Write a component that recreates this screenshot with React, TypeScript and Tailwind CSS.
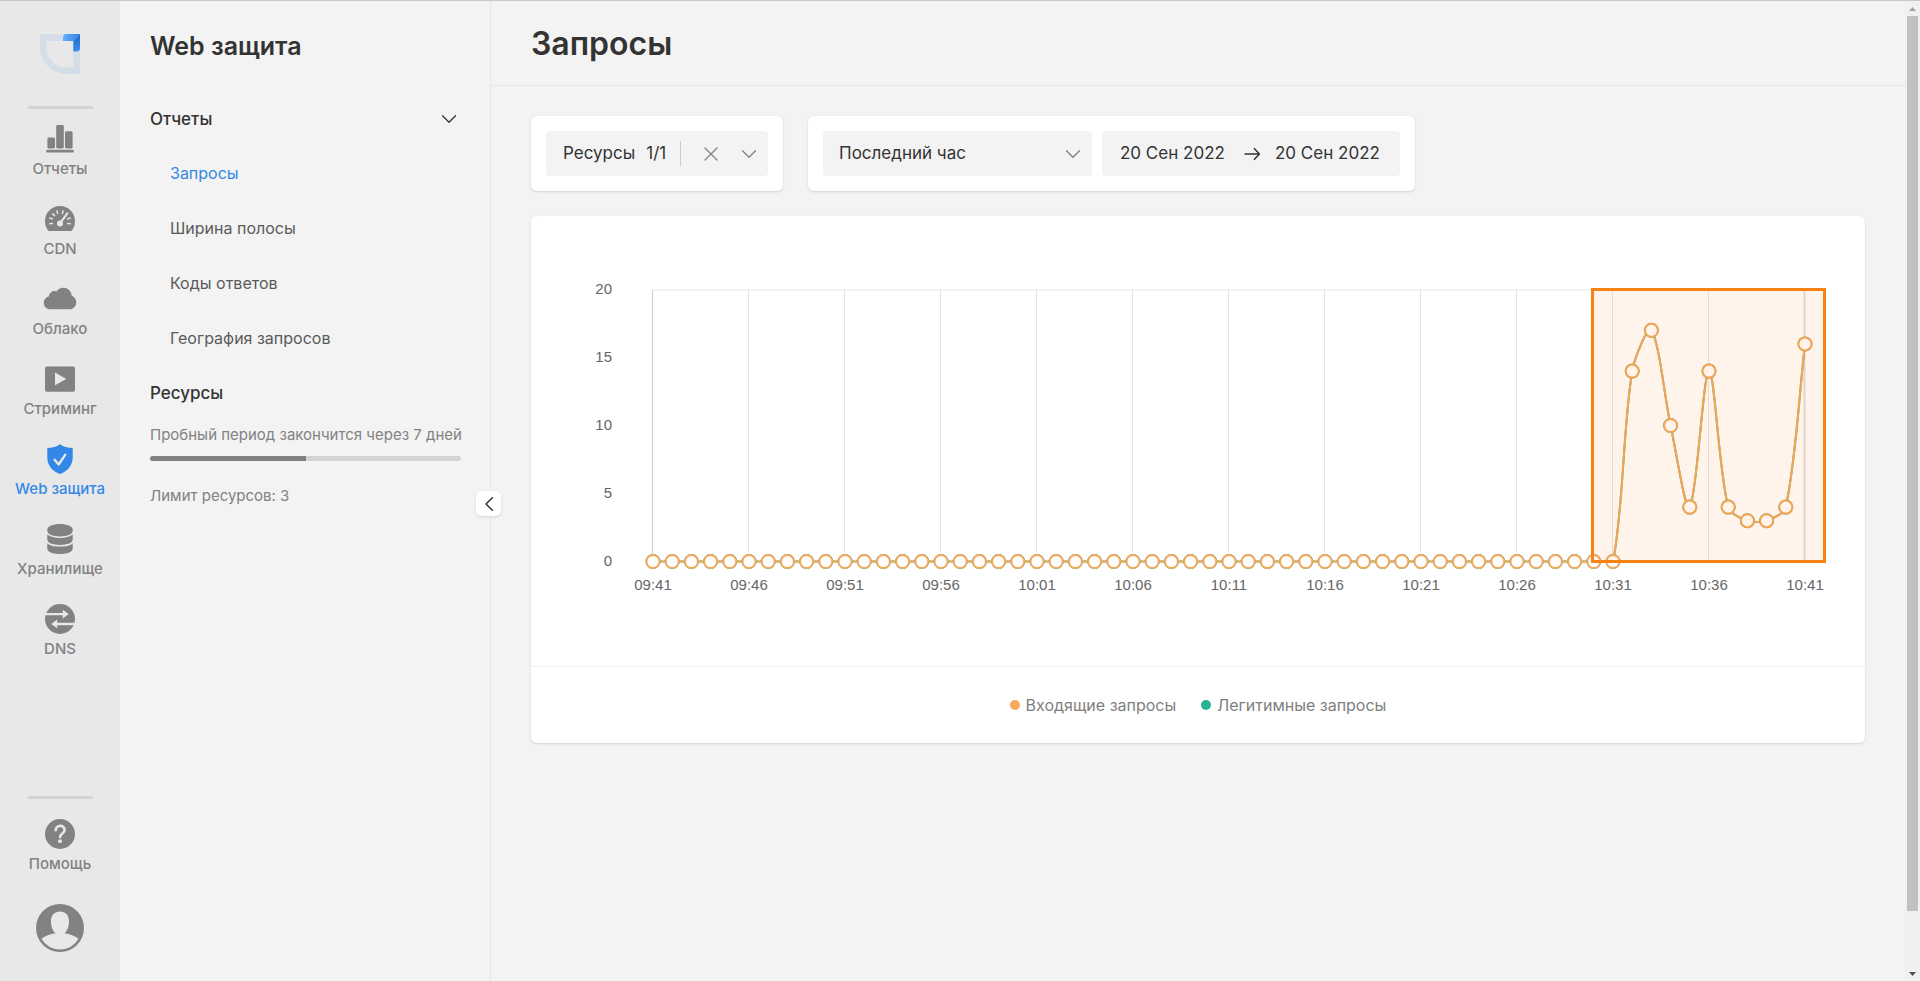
import React, { useState } from 'react';
import clsx from 'clsx';

type NavItem = {
  id: string;
  label: string;
  icon: React.ReactNode;
};

const navItems: NavItem[] = [
  {
    id: 'reports',
    label: 'Отчеты',
    icon: (
      <>
        <rect x="2.4" y="13.4" width="7.6" height="11" rx="1.4" />
        <rect x="11.2" y="1" width="7.6" height="23.4" rx="1.4" />
        <rect x="20" y="7.2" width="7.6" height="17.2" rx="1.4" />
        <rect x="1.2" y="25.8" width="27.6" height="2.6" rx="1" />
      </>
    ),
  },
  {
    id: 'cdn',
    label: 'CDN',
    icon: (
      <>
        <path d="M15 2C6.700 2 0 8.700 0 17c0 3.200.9 6.100 2.500 8.700.5.8 1.300 1.300 2.300 1.300h20.400c1 0 1.800-.5 2.300-1.300A16 16 0 0 0 30 17C30 8.700 23.300 2 15 2z" />
        <g stroke="#e8e8e8" strokeWidth="1.500" strokeLinecap="round">
          <path d="M4.800 19.800l2.600-.3M4.800 14l2.500.9M7.600 9.900l2 1.700M12 7l.6 2.400M18 7l-.6 2.400M25.200 14l-2.500.9M25.200 19.800l-2.600-.3" />
          <path d="M22.300 9.300l-6 8.400" strokeWidth="2" />
        </g>
        <circle cx="15" cy="19.600" r="3" fill="#e8e8e8" />
      </>
    ),
  },
  {
    id: 'cloud',
    label: 'Облако',
    icon: (
      <path d="M5.500 25.300C1.600 25.300-1.200 22.500-1.200 19c0-3.300 2.200-5.800 5-6.400C4 9.600 6.400 7 9.300 7c.8 0 1.600.2 2.200.5C13 4.900 15.500 3.800 18.200 3.800c4.700 0 8.200 3.500 8.500 8 2.600.8 4.600 3.600 4.600 6.700 0 3.700-3 6.800-6.700 6.800z" />
    ),
  },
  {
    id: 'streaming',
    label: 'Стриминг',
    icon: (
      <>
        <rect x="0" y="2.400" width="30" height="25.300" rx="1.800" />
        <path d="M10 8.500v12.800L21.300 15z" fill="#e8e8e8" />
      </>
    ),
  },
  {
    id: 'waf',
    label: 'Web защита',
    icon: (
      <>
        <path d="M15 .2c3.500 2.600 7.600 3.700 12.700 3.700v9.600c0 7.500-4.600 13.400-12.700 16.500C6.900 26.900 2.300 21 2.300 13.500V3.900C7.400 3.900 11.500 2.800 15 .2z" />
        <path d="M9.600 15.800l4.100 4.700 6.600-9.900" fill="none" stroke="#e8e8e8" strokeWidth="2.300" strokeLinecap="round" strokeLinejoin="round" />
      </>
    ),
  },
  {
    id: 'storage',
    label: 'Хранилище',
    icon: (
      <>
        <path d="M2.300 5.700C2.300 2.300 7.500 0 15 0s12.700 2.300 12.700 5.700v1.100c0 3.400-5.200 5.700-12.700 5.700S2.300 10.200 2.300 6.800z" />
        <path d="M2.300 10.600C5 12.900 9.500 14 15 14s10-1.100 12.700-3.400v5C27.700 19 22.500 21 15 21S2.300 19 2.300 15.600z" />
        <path d="M2.300 19.400C5 21.600 9.500 22.600 15 22.600s10-1 12.700-3.200v5.100c0 3.300-5.200 5.500-12.700 5.500S2.300 27.800 2.300 24.500z" />
      </>
    ),
  },
  {
    id: 'dns',
    label: 'DNS',
    icon: (
      <>
        <circle cx="15" cy="15" r="15" />
        <g fill="#e8e8e8">
          <path d="M0 8.900h17.800V5.800l5.900 4.300-5.900 4.300v-3.100H0z" />
          <path d="M30 18.800H12.200v-3.200l-5.900 4.400 5.900 4.300v-3.100H30z" />
        </g>
      </>
    ),
  },
];

const reportLinks = ['Запросы', 'Ширина полосы', 'Коды ответов', 'География запросов'];

// requests per minute, 09:41 - 10:41
const requests = [...Array(51).fill(0), 14, 17, 10, 4, 14, 4, 3, 3, 4, 16] as number[];
const timeLabels = ['09:41', '09:46', '09:51', '09:56', '10:01', '10:06', '10:11', '10:16', '10:21', '10:26', '10:31', '10:36', '10:41'];
const valueLabels = [20, 15, 10, 5, 0];

const LEFT = 122;
const TOP = 73.500;
const BOTTOM = 345.500;
const STEP = 19.2;

const points = requests.map((value, i) => ({
  x: LEFT + i * STEP,
  y: BOTTOM - (value / 20) * (BOTTOM - TOP),
}));

const clampY = (y: number) => Math.min(BOTTOM, Math.max(TOP, y));

function buildCurve(tension: number) {
  const handles = points.map((p, i) => {
    const prev = points[i - 1] ?? p;
    const next = points[i + 1] ?? p;
    const d0 = Math.hypot(p.x - prev.x, p.y - prev.y);
    const d1 = Math.hypot(next.x - p.x, next.y - p.y);
    const a = (tension * d0) / (d0 + d1);
    const b = (tension * d1) / (d0 + d1);
    return {
      inX: p.x - a * (next.x - prev.x),
      inY: clampY(p.y - a * (next.y - prev.y)),
      outX: p.x + b * (next.x - prev.x),
      outY: clampY(p.y + b * (next.y - prev.y)),
    };
  });

  return points
    .map((p, i) =>
      i === 0
        ? `M${p.x} ${p.y}`
        : `C${handles[i - 1].outX} ${handles[i - 1].outY} ${handles[i].inX} ${handles[i].inY} ${p.x} ${p.y}`
    )
    .join('');
}

const curve = buildCurve(0.3);

function Chevron({ className }: { className?: string }) {
  return (
    <svg viewBox="0 0 14 8" className={clsx('w-[14px] h-2 shrink-0', className)} fill="none" stroke="currentColor" aria-hidden="true">
      <path d="M.5.700L7 7.200 13.500.700" strokeWidth="1.300" strokeLinecap="round" strokeLinejoin="round" />
    </svg>
  );
}

function Logo() {
  return (
    <svg viewBox="0 0 40 40" className="w-10 h-10" aria-hidden="true">
      <defs>
        <linearGradient id="logo-top" x1="0" x2="1">
          <stop offset="0" stopColor="#69b0ff" />
          <stop offset="1" stopColor="#2c80e6" />
        </linearGradient>
        <linearGradient id="logo-side" x1="0" x2="0" y1="0" y2="1">
          <stop offset="0" stopColor="#1b68c4" />
          <stop offset="1" stopColor="#3a8ff0" />
        </linearGradient>
      </defs>
      <path d="M0 0h40v40H27C12 40 0 28 0 13zM6.300 7v6c0 11.500 9 20.300 20.700 20.300h6.300V7z" fill="#d5dee8" fillRule="evenodd" />
      <path d="M40 0H26c-2 0-3 1.500-3 3.500V7h10.300z" fill="url(#logo-top)" />
      <path d="M40 0v14.500c0 1.700-1.500 3-3.500 3h-3.200V7z" fill="url(#logo-side)" />
    </svg>
  );
}

function SideButton({ item, active, onClick }: { item: NavItem; active?: boolean; onClick?: () => void }) {
  return (
    <button
      onClick={onClick}
      className={clsx('flex flex-col items-center gap-[5px] w-full', active ? 'text-[#3388e7]' : 'text-[#828282]')}
    >
      <svg viewBox="0 0 30 30" className="w-[30px] h-[30px] overflow-visible" fill="currentColor" aria-hidden="true">
        {item.icon}
      </svg>
      <span className="text-[15px] leading-5 font-medium">{item.label}</span>
    </button>
  );
}

const helpItem: NavItem = {
  id: 'help',
  label: 'Помощь',
  icon: (
    <>
      <circle cx="15" cy="15" r="15" />
      <path d="M10.700 11.200c0-2.600 1.900-4.300 4.500-4.300 2.500 0 4.400 1.600 4.400 4 0 3.400-4.500 3.600-4.500 7" fill="none" stroke="#e8e8e8" strokeWidth="2.600" strokeLinecap="round" />
      <circle cx="15" cy="22.200" r="1.900" fill="#e8e8e8" />
    </>
  ),
};

function RequestsChart() {
  return (
    <svg viewBox="0 0 1334 450" className="block w-full h-auto" role="img" aria-label="График запросов">
      <path d={`M${LEFT} 74H1274`} stroke="#f2f2f2" strokeWidth="2" />
      {timeLabels.map((label, i) => (
        <path
          key={label}
          d={`M${121.5 + i * 96} 74V346`}
          stroke={i === 0 ? '#cccccc' : i === 12 ? '#dddddd' : '#e3e3e3'}
          strokeWidth={i === 12 ? 2 : 1}
        />
      ))}

      <g fill="#666666" className="font-['Liberation_Sans',sans-serif] text-[15px]">
        {valueLabels.map((value, i) => (
          <text key={value} x="81" y={78 + i * 68} textAnchor="end">
            {value}
          </text>
        ))}
        {timeLabels.map((label, i) => (
          <text key={label} x={LEFT + i * 96} y="374" textAnchor="middle">
            {label}
          </text>
        ))}
      </g>

      {/* both series have the same values, so the second one only shows at the edges */}
      <path d={curve} fill="none" stroke="#2bb596" strokeWidth="2" />
      <path d={curve} fill="none" stroke="#f7a859" strokeWidth="2" />
      {points.map((p) => (
        <g key={p.x} strokeWidth="2">
          <circle cx={p.x} cy={p.y} r="6.500" fill="#ffffff" stroke="#2bb596" />
          <circle cx={p.x} cy={p.y} r="6.500" fill="#ffffff" stroke="#f7a859" />
        </g>
      ))}

      <rect x="1061.500" y="73.500" width="232" height="272" fill="#f58220" fillOpacity="0.09" stroke="#f98217" strokeWidth="3" />
    </svg>
  );
}

function App() {
  const [section, setSection] = useState('waf');
  const [report, setReport] = useState('Запросы');
  const [reportsOpen, setReportsOpen] = useState(true);

  return (
    <div className="flex min-h-screen border-t border-[#c8c8c8] bg-[#f3f3f3] text-[#333333] font-[Inter,sans-serif]">
      <aside className="flex flex-col items-center w-[120px] shrink-0 bg-[#e8e8e8] pt-[33px] pb-[29px]">
        <Logo />
        <div className="w-[65px] h-[3px] mt-8 rounded-sm bg-[#d3d3d3]" />
        <nav className="flex flex-col gap-[25px] w-full mt-[15px]">
          {navItems.map((item) => (
            <SideButton key={item.id} item={item} active={item.id === section} onClick={() => setSection(item.id)} />
          ))}
        </nav>
        <div className="w-[65px] h-[3px] mt-auto mb-5 rounded-sm bg-[#d3d3d3]" />
        <SideButton item={helpItem} />
        <button className="mt-[30px]" aria-label="Профиль">
          <svg viewBox="0 0 48 48" className="w-12 h-12" aria-hidden="true">
            <circle cx="24" cy="24" r="24" fill="#828282" />
            <path d="M24 7.500c5.500 0 9 3.700 9 9.500 0 6-1.500 9.500-4.500 12.300 5.500.7 10.300 2.500 14 5.500A21.800 21.800 0 0 1 24 45.500 21.800 21.800 0 0 1 5.500 34.800c3.700-3 8.500-4.800 14-5.500C16.500 26.500 15 23 15 17c0-5.800 3.500-9.500 9-9.500z" fill="#e8e8e8" />
          </svg>
        </button>
      </aside>

      <section className="relative w-[371px] shrink-0 border-r border-[#e6e6e6] pl-[30px] pr-[29px] pt-[29px]">
        <h2 className="text-[25px] leading-8 font-semibold">Web защита</h2>
        <button
          onClick={() => setReportsOpen(!reportsOpen)}
          className="flex items-center justify-between w-full mt-[45px] pr-[5px] text-[17px] leading-6 font-medium"
        >
          Отчеты
          <Chevron />
        </button>
        {reportsOpen && (
          <nav className="flex flex-col gap-[31px] mt-[30px] pl-5 text-base">
            {reportLinks.map((link) => (
              <a
                key={link}
                href="#"
                onClick={() => setReport(link)}
                className={link === report ? 'text-[#3388e7]' : 'text-[#5a5a5a]'}
              >
                {link}
              </a>
            ))}
          </nav>
        )}
        <h3 className="mt-[31px] text-[17px] leading-6 font-medium">Ресурсы</h3>
        <p className="mt-5 text-[15px] leading-5 whitespace-nowrap text-[#828282]">Пробный период закончится через 7 дней</p>
        <div className="h-[5px] mt-[11px] rounded-full bg-[#d3d3d3] overflow-hidden">
          <div className="w-1/2 h-full bg-[#808080]" />
        </div>
        <p className="mt-[25px] text-[15px] leading-5 text-[#828282]">Лимит ресурсов: 3</p>

        <button
          aria-label="Свернуть меню"
          className="absolute top-[490px] -right-[11px] flex items-center justify-center w-[25px] h-[25px] rounded-[5px] bg-white shadow-sm"
        >
          <svg viewBox="0 0 8 14" className="w-2 h-[14px]" fill="none" stroke="currentColor" aria-hidden="true">
            <path d="M7.300.700L1 7l6.300 6.300" strokeWidth="1.500" strokeLinecap="round" strokeLinejoin="round" />
          </svg>
        </button>
      </section>

      <main className="flex-1 min-w-0">
        <header className="px-10 pt-[23px] pb-[21px] border-b border-[#e6e6e6]">
          <h1 className="text-[32px] leading-10 font-semibold">Запросы</h1>
        </header>

        <div className="px-10 pt-[30px] text-[17px]">
          <div className="flex flex-wrap gap-[25px]">
            <div className="p-[15px] rounded-md bg-white shadow-sm">
              <div className="flex items-center w-[222px] h-[45px] pl-[17px] pr-3 rounded bg-[#f3f3f3]">
                <label htmlFor="resources">Ресурсы</label>
                <select id="resources" className="ml-[11px] w-[34px] appearance-none outline-none">
                  <option>1/1</option>
                </select>
                <div className="w-px h-[25px] bg-[#cccccc]" />
                <button className="ml-auto text-[#808080]" aria-label="Очистить">
                  <svg viewBox="0 0 14 14" className="w-[14px] h-[14px]" fill="none" stroke="currentColor" aria-hidden="true">
                    <path d="M1 1l12 12M13 1L1 13" strokeWidth="1.200" strokeLinecap="round" />
                  </svg>
                </button>
                <button className="ml-6 text-[#808080]" aria-label="Открыть список ресурсов">
                  <Chevron />
                </button>
              </div>
            </div>

            <div className="flex gap-[10px] p-[15px] rounded-md bg-white shadow-sm">
              <div className="relative w-[269px]">
                <select aria-label="Период" className="w-full h-[45px] px-4 rounded bg-[#f3f3f3] appearance-none outline-none">
                  <option>Последний час</option>
                </select>
                <Chevron className="absolute right-3 top-[19px] text-[#808080] pointer-events-none" />
              </div>
              <div className="flex items-center justify-between w-[298px] h-[45px] pl-[18px] pr-4 rounded bg-[#f3f3f3]">
                <input aria-label="Дата начала" className="w-[109px] bg-transparent outline-none" defaultValue="20 Сен 2022" />
                <svg viewBox="0 0 16 14" className="w-4 h-[14px]" fill="none" stroke="currentColor" aria-hidden="true">
                  <path d="M.5 7h15M10 1.200L15.500 7 10 12.800" strokeWidth="1.500" strokeLinejoin="round" />
                </svg>
                <input aria-label="Дата окончания" className="w-[109px] bg-transparent outline-none" defaultValue="20 Сен 2022" />
              </div>
            </div>
          </div>

          <div className="mt-[25px] rounded-md bg-white shadow-sm">
            <RequestsChart />
            <div className="flex items-center justify-center gap-[25px] h-[77px] border-t border-[#f0f0f0] text-base text-[#808080]">
              <span className="flex items-center gap-[6px]">
                <i className="w-[10px] h-[10px] rounded-full bg-[#f7a859]" />
                Входящие запросы
              </span>
              <span className="flex items-center gap-[6px]">
                <i className="w-[10px] h-[10px] rounded-full bg-[#26b394]" />
                Легитимные запросы
              </span>
            </div>
          </div>
        </div>
      </main>

      <div className="flex flex-col items-center w-[15px] shrink-0 bg-[#f0f0f0]" aria-hidden="true">
        <svg viewBox="0 0 15 15" className="w-[15px] h-[15px] shrink-0">
          <path d="M4 10h7L7.500 6z" fill="#a0a0a0" />
        </svg>
        <div className="w-[11px] flex-1 bg-[#c1c1c1]" />
        <svg viewBox="0 0 15 15" className="w-[15px] h-[15px] shrink-0 mt-[55px]">
          <path d="M4 6h7l-3.500 4z" fill="#505050" />
        </svg>
      </div>
    </div>
  );
}

export default App;
